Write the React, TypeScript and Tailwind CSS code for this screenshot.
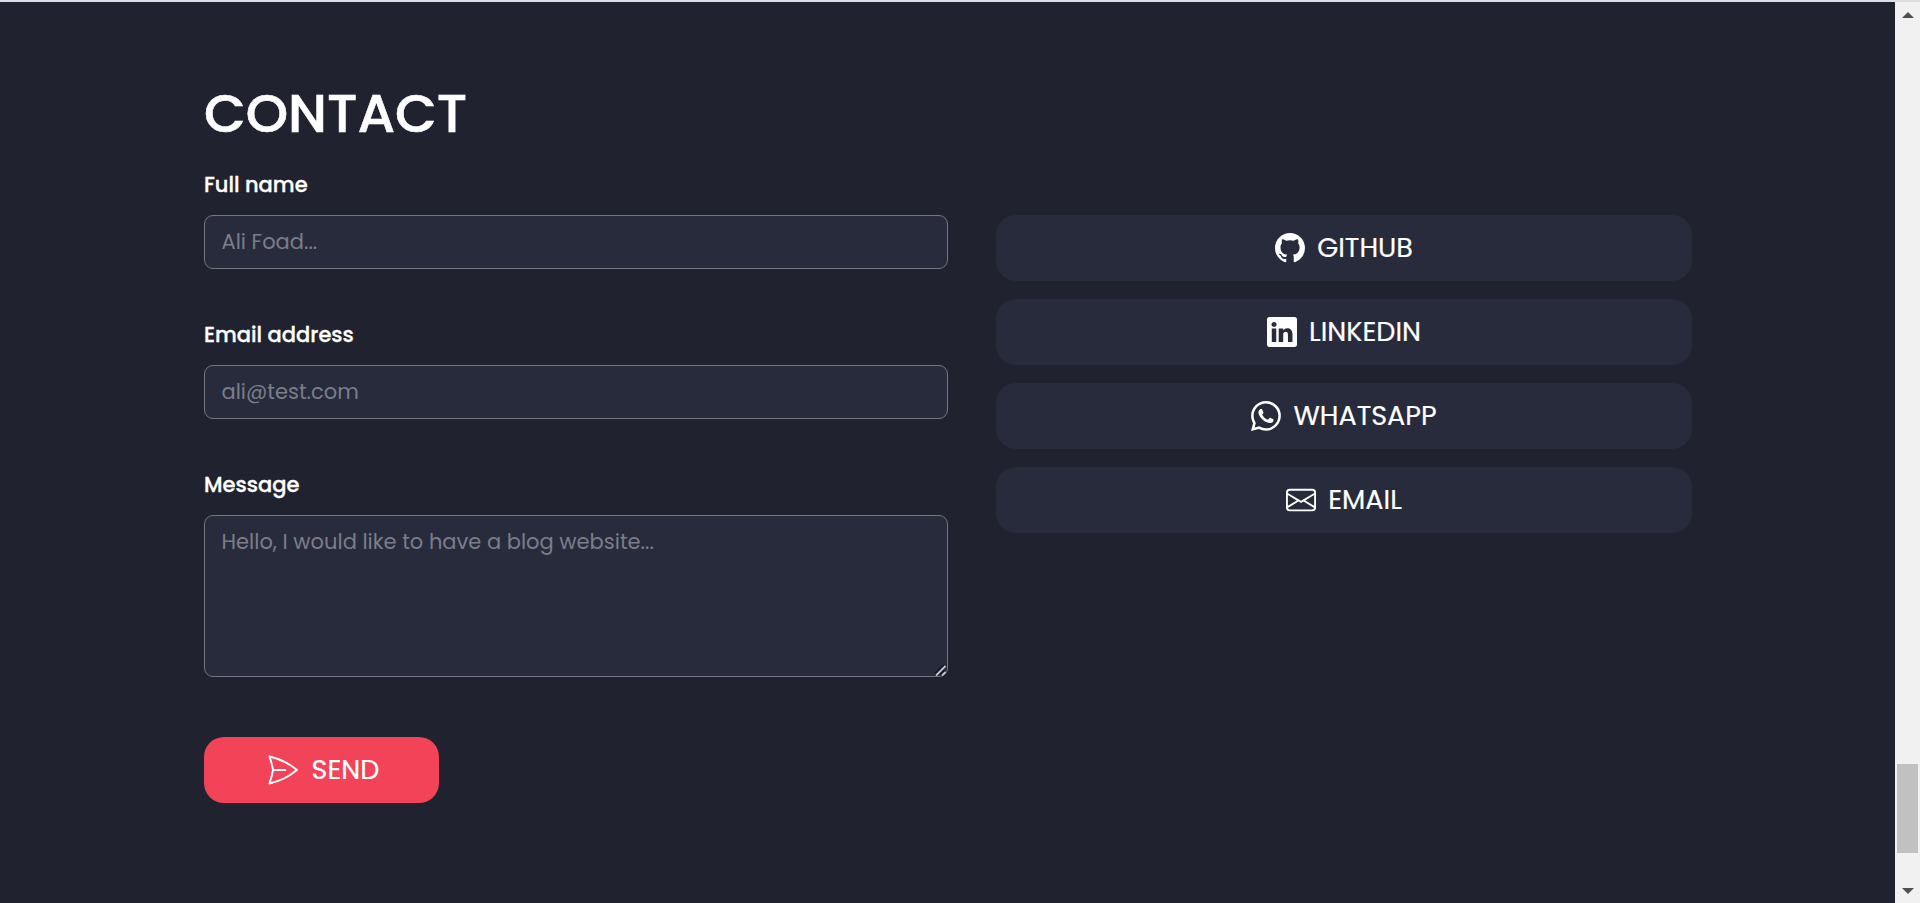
import React from "react";
import { BsEnvelope, BsGithub, BsLinkedin, BsWhatsapp } from "react-icons/bs";

const links = [
  { label: "GITHUB", Icon: BsGithub },
  { label: "LINKEDIN", Icon: BsLinkedin },
  { label: "WHATSAPP", Icon: BsWhatsapp },
  { label: "EMAIL", Icon: BsEnvelope },
];

const labelClass = "block text-[21px] leading-[30px] font-medium text-white [-webkit-text-stroke:0.3px_white]";
const fieldClass =
  "block w-full rounded-[9px] border border-[#757684] bg-[#272b3c] px-[16.5px] text-[21px] text-white outline-none placeholder:text-[#7b7d8a]";

function SendIcon() {
  return (
    <svg width="30" height="30" viewBox="0 0 30 30" fill="none" stroke="currentColor" strokeWidth="1.9" strokeLinejoin="round" strokeLinecap="round">
      <path d="M1.4 1.5C11.5 3.7 20.8 8.2 29 15C20.8 21.8 11.5 26.3 1.4 28.5C3 24.2 4.3 19.7 5 15C4.3 10.3 3 5.8 1.4 1.5Z" />
      <path d="M5 15H17.3" />
    </svg>
  );
}

function ResizeGrip() {
  return (
    <svg className="pointer-events-none absolute right-[2px] bottom-[1px]" width="11" height="11" viewBox="0 0 11 11" fill="none" strokeWidth="1.9">
      <path d="M-0.5 9.5L9.5 -0.5M5.5 9.5L9.5 5.5" stroke="#11121c" />
      <path d="M1 10.5L10.5 1M7 10.5L10.5 7" stroke="#c4c5ce" />
    </svg>
  );
}

function Scrollbar() {
  return (
    <div className="flex w-[25px] shrink-0 flex-col items-center bg-[#f1f1f1] pt-[10px] pb-[9px]">
      <svg width="12" height="6" viewBox="0 0 12 6" fill="#505050">
        <path d="M0 6L6 0L12 6Z" />
      </svg>
      <div className="mt-auto mb-[35px] h-[89px] w-[21px] bg-[#c1c1c1]" />
      <svg width="12" height="6" viewBox="0 0 12 6" fill="#505050">
        <path d="M0 0H12L6 6Z" />
      </svg>
    </div>
  );
}

export default function App() {
  return (
    <div className="flex h-[903px] w-[1920px] flex-col overflow-hidden bg-[#212230] font-[Poppins,Inter,sans-serif]">
      <div className="h-[2px] shrink-0 bg-[#dcdee3]" />
      <div className="flex min-h-0 flex-1">
        <main className="flex-1 pt-[79px] pl-[204px]">
          <h1 className="text-[54px] leading-[64px] font-medium text-white [-webkit-text-stroke:0.6px_white]">CONTACT</h1>
          <div className="mt-[25px] flex gap-12">
            <form className="w-[744px]">
              <label htmlFor="name" className={labelClass}>Full name</label>
              <input id="name" placeholder="Ali Foad..." className={`${fieldClass} mt-[15px] h-[54px] pb-[2px]`} />
              <label htmlFor="email" className={`${labelClass} mt-[51px]`}>Email address</label>
              <input id="email" placeholder="ali@test.com" className={`${fieldClass} mt-[15px] h-[54px] pb-[2px]`} />
              <label htmlFor="message" className={`${labelClass} mt-[51px]`}>Message</label>
              <div className="relative mt-[15px]">
                <textarea id="message" placeholder="Hello, I would like to have a blog website..." className={`${fieldClass} h-[162px] resize-none pt-[10px] leading-[32px]`} />
                <ResizeGrip />
              </div>
              <button type="button" className="mt-[60px] flex h-[66px] w-[235px] items-center justify-center gap-[14px] rounded-[20px] bg-[#f24358] pl-[4px] text-white">
                <SendIcon />
                <span className="text-[27px] leading-9 [-webkit-text-stroke:0.2px_white]">SEND</span>
              </button>
            </form>
            <nav className="mt-[45px] flex w-[696px] flex-col gap-[18px]">
              {links.map(({ label, Icon }) => (
                <a key={label} className="flex h-[66px] items-center justify-center gap-3 rounded-[20px] bg-[#272b3c] text-white">
                  <Icon size={30} />
                  <span className="text-[27px] leading-9 [-webkit-text-stroke:0.2px_white]">{label}</span>
                </a>
              ))}
            </nav>
          </div>
        </main>
        <Scrollbar />
      </div>
    </div>
  );
}
